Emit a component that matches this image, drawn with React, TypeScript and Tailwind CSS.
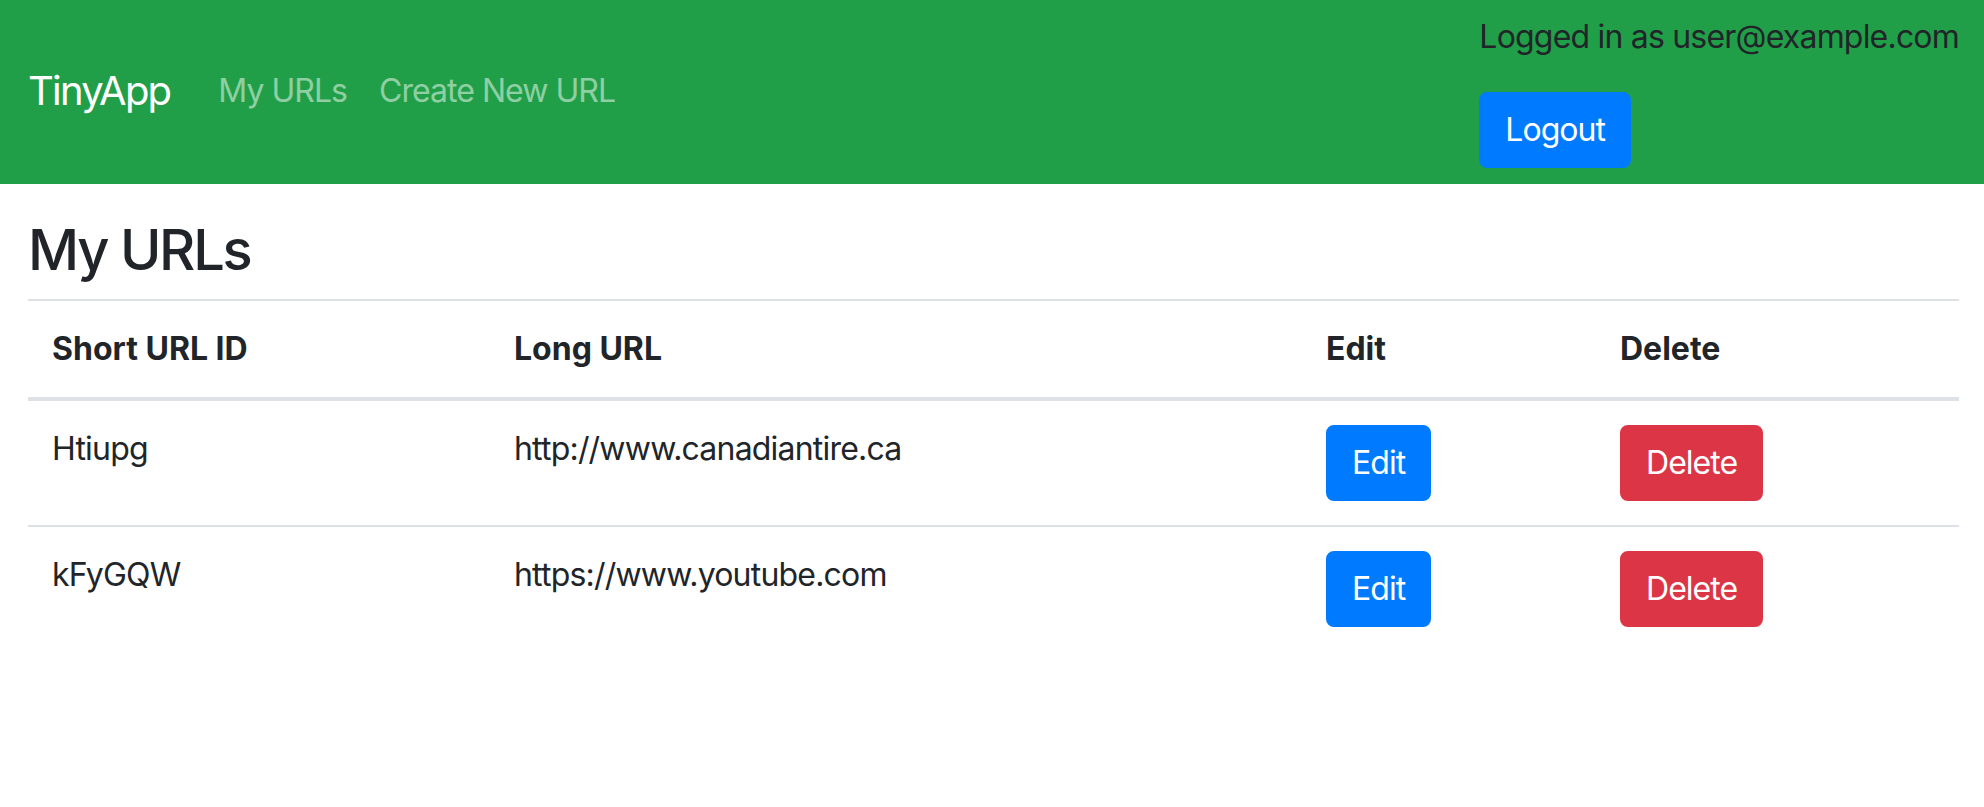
const urls = [
  { id: "Htiupg", longURL: "http://www.canadiantire.ca" },
  { id: "kFyGQW", longURL: "https://www.youtube.com" },
];

export default function App() {
  return (
    <div className="min-h-[807px] bg-white font-['Inter','Liberation_Sans',sans-serif] text-[#212529] tracking-[-0.05em]">
      <nav className="flex items-center justify-between bg-[#209f48] pl-[28px] pr-[25px] pt-[13px] pb-[16px]">
        <div className="flex items-center">
          <a href="#" className="mr-[32px] text-[40px] leading-[60px] tracking-[-0.045em] text-white">
            TinyApp
          </a>
          <a href="#" className="px-[16px] text-[32px] leading-[48px] tracking-[-0.03em] text-white/50">
            My URLs
          </a>
          <a href="#" className="px-[16px] text-[32px] leading-[48px] tracking-[-0.03em] text-white/50">
            Create New URL
          </a>
        </div>
        <div>
          <p className="mb-[31px] text-[32px] leading-[48px]">Logged in as user@example.com</p>
          <button className="rounded-[8px] border-2 border-[#007bff] bg-[#007bff] px-[24px] py-[12px] text-[32px] leading-[48px] text-white tracking-[-0.03em]">
            Logout
          </button>
        </div>
      </nav>

      <main className="px-[28px] pr-[25px]">
        <h3 className="mt-[33px] mb-[15px] text-[56px] leading-[67px] font-medium tracking-[-0.04em]">My URLs</h3>
        <table className="w-full table-fixed border-collapse text-[32px] leading-[48px]">
          <thead>
            <tr>
              <th className="w-[462px] border-t-2 border-b-4 border-[#dee2e6] p-[24px] text-left align-bottom font-bold tracking-normal">
                Short URL ID
              </th>
              <th className="w-[812px] border-t-2 border-b-4 border-[#dee2e6] p-[24px] text-left align-bottom font-bold tracking-normal">
                Long URL
              </th>
              <th className="w-[294px] border-t-2 border-b-4 border-[#dee2e6] p-[24px] text-left align-bottom font-bold tracking-normal">
                Edit
              </th>
              <th className="border-t-2 border-b-4 border-[#dee2e6] p-[24px] text-left align-bottom font-bold tracking-normal">
                Delete
              </th>
            </tr>
          </thead>
          <tbody>
            {urls.map((u, i) => (
              <tr key={u.id}>
                <td className={`${i > 0 ? "border-t-2" : ""} border-[#dee2e6] p-[24px] align-top`}>{u.id}</td>
                <td className={`${i > 0 ? "border-t-2" : ""} border-[#dee2e6] p-[24px] align-top`}>{u.longURL}</td>
                <td className={`${i > 0 ? "border-t-2" : ""} border-[#dee2e6] p-[24px] align-top`}>
                  <button className="rounded-[8px] border-2 border-[#007bff] bg-[#007bff] px-[24px] py-[12px] leading-[48px] text-white tracking-[-0.03em]">
                    Edit
                  </button>
                </td>
                <td className={`${i > 0 ? "border-t-2" : ""} border-[#dee2e6] p-[24px] align-top`}>
                  <button className="rounded-[8px] border-2 border-[#dc3545] bg-[#dc3545] px-[24px] py-[12px] leading-[48px] text-white tracking-[-0.03em]">
                    Delete
                  </button>
                </td>
              </tr>
            ))}
          </tbody>
        </table>
      </main>
    </div>
  );
}
